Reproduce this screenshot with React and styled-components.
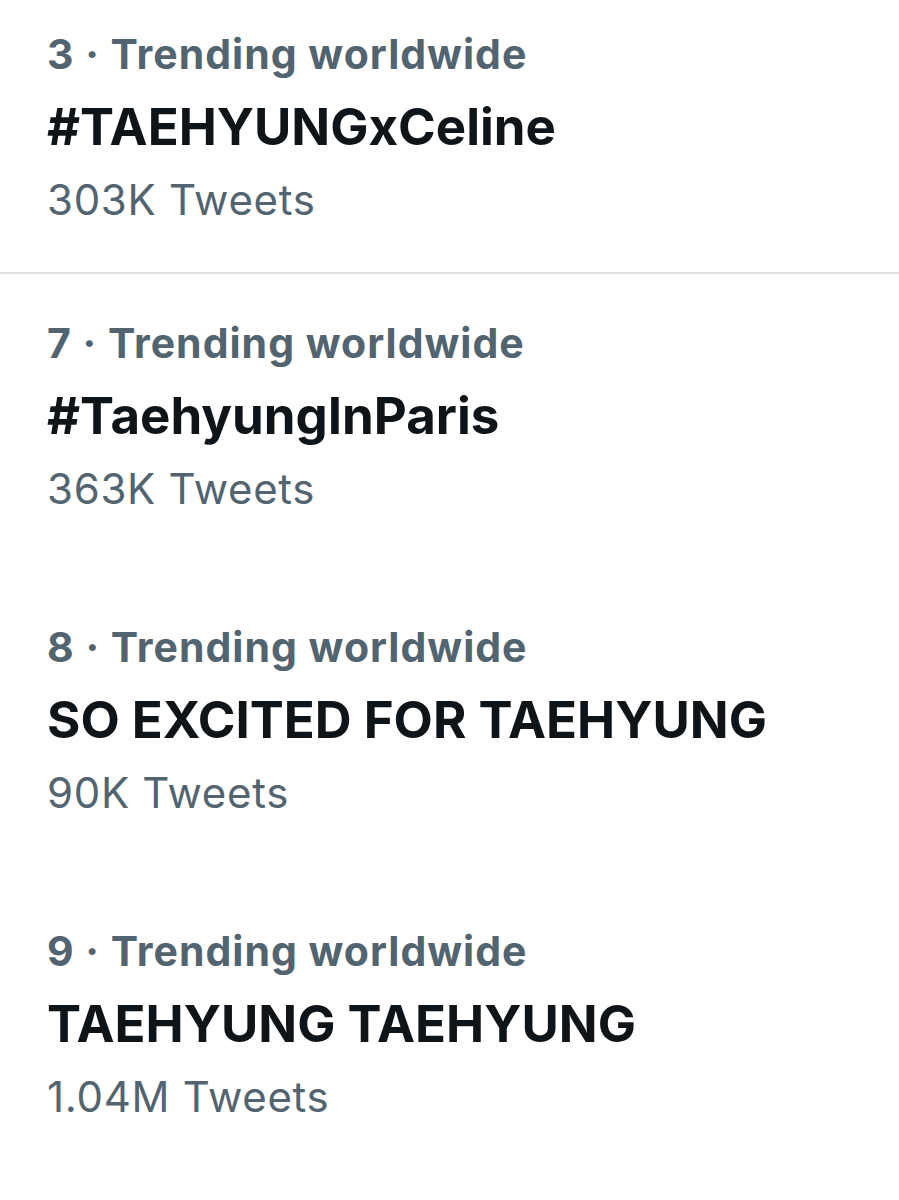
import React from 'react';
import styled, { createGlobalStyle } from 'styled-components';

const trends = [
  { rank: 3, name: '#TAEHYUNGxCeline', count: '303K' },
  { rank: 7, name: '#TaehyungInParis', count: '363K' },
  { rank: 8, name: 'SO EXCITED FOR TAEHYUNG', count: '90K' },
  { rank: 9, name: 'TAEHYUNG TAEHYUNG', count: '1.04M' },
];

export default function App() {
  return (
    <>
      <GlobalStyle />
      <List>
        {trends.map((t, i) => (
          <Trend key={t.rank} $first={i === 0}>
            <Meta>{`${t.rank} · Trending worldwide`}</Meta>
            <Name>{t.name}</Name>
            <Count>{`${t.count} Tweets`}</Count>
          </Trend>
        ))}
      </List>
    </>
  );
}

const GlobalStyle = createGlobalStyle`
  body {
    margin: 0;
    background: #fff;
    font-family: Inter, "Liberation Sans", sans-serif;
  }
`;

const List = styled.div`
  display: flex;
  flex-direction: column;
  width: 899px;
`;

const Trend = styled.div`
  display: flex;
  flex-direction: column;
  padding: ${(p) => (p.$first ? '29px 0 42px 47px' : '44px 0 59px 47px')};
  border-bottom: ${(p) => (p.$first ? '2px solid #dde3e7' : 'none')};
`;

const Meta = styled.div`
  font-size: 41px;
  line-height: 50px;
  font-weight: 700;
  letter-spacing: 1px;
  color: #536471;
`;

const Name = styled.div`
  font-size: 51px;
  line-height: 72px;
  font-weight: 700;
  color: #0f1419;
  margin-top: 12px;
`;

const Count = styled.div`
  font-size: 42px;
  line-height: 60px;
  font-weight: 400;
  letter-spacing: 0.7px;
  color: #536471;
  margin-top: 7px;
`;
